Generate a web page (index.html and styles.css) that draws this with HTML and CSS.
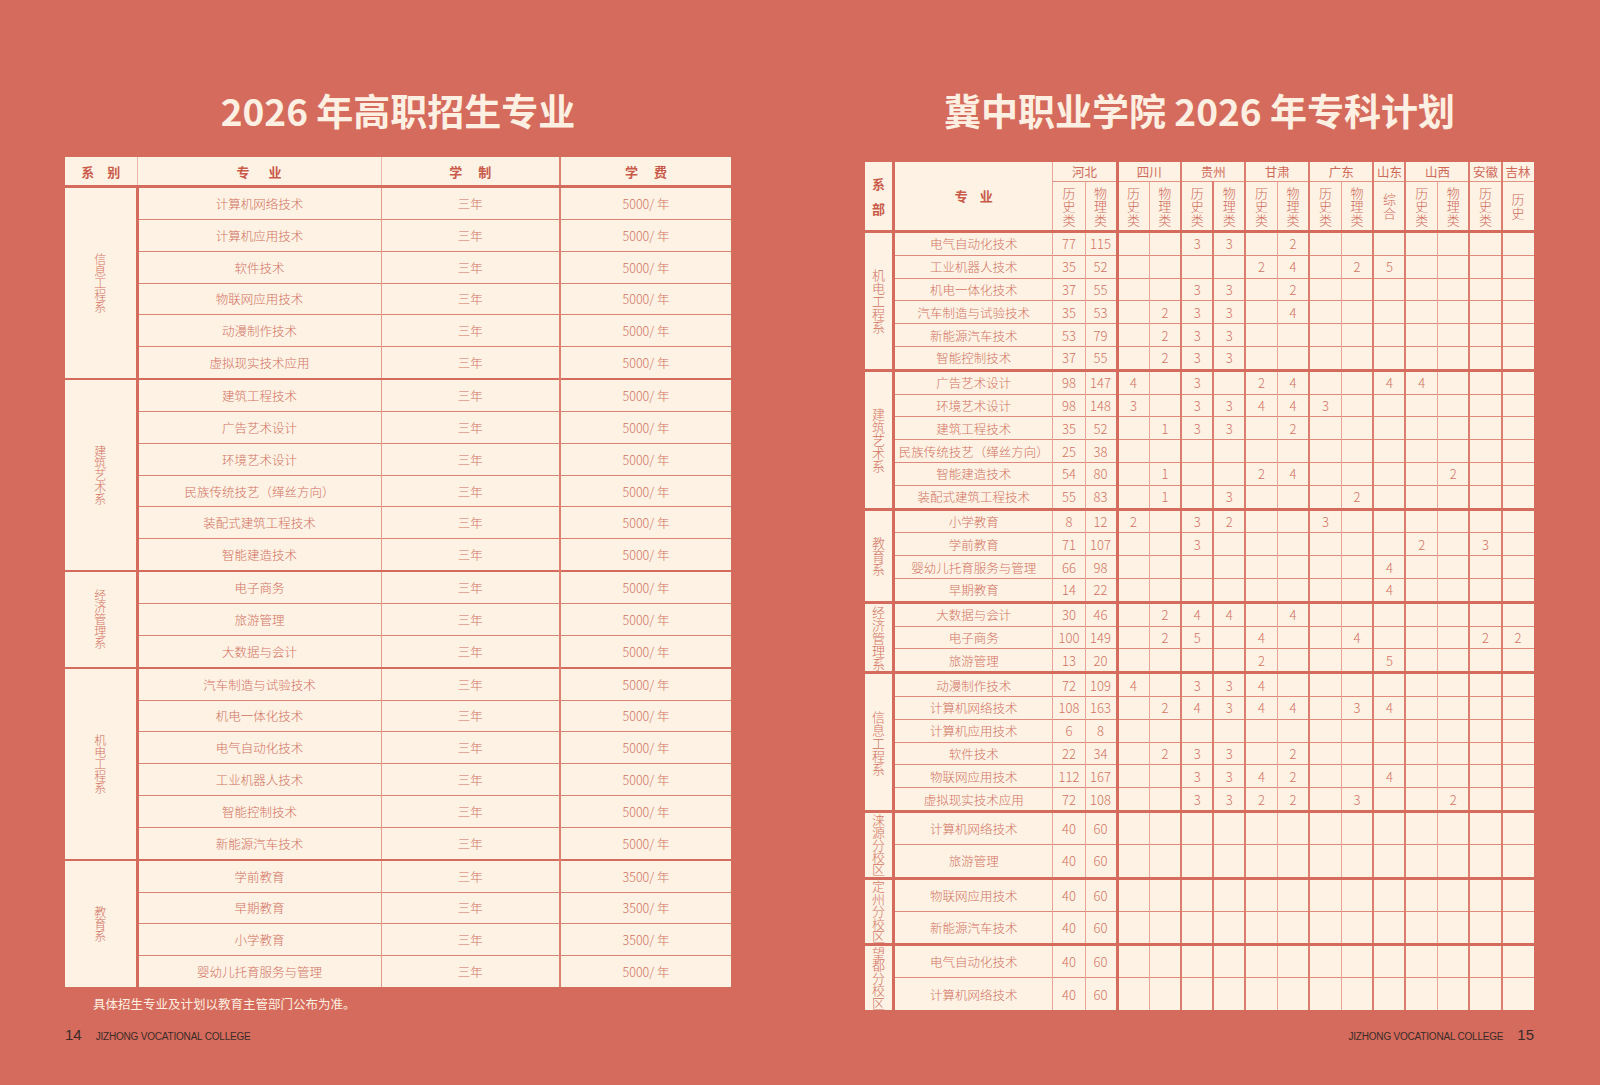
FILE: index.html
```html
<!DOCTYPE html>
<html lang="zh-CN">
<head>
<meta charset="utf-8">
<title>2026 年高职招生专业</title>
<link rel="stylesheet" href="styles.css">
</head>
<body>
<div class="spread">
  <section class="page page-l">
    <h1 class="title">2026 年高职招生专业</h1>
    <table class="tbl tbl-l">
      <colgroup>
        <col class="l-dept"><col class="l-major"><col class="l-len"><col class="l-fee">
      </colgroup>
      <thead>
        <tr><th><span class="sp13">系别</span></th><th><span class="sp19">专业</span></th><th><span class="sp16">学制</span></th><th><span class="sp16">学费</span></th></tr>
      </thead>
      <tbody>
        <tr class="g"><td rowspan="6" class="dept"><span class="vt">信息工程系</span></td><td>计算机网络技术</td><td>三年</td><td>5000/ 年</td></tr>
        <tr><td>计算机应用技术</td><td>三年</td><td>5000/ 年</td></tr>
        <tr><td>软件技术</td><td>三年</td><td>5000/ 年</td></tr>
        <tr><td>物联网应用技术</td><td>三年</td><td>5000/ 年</td></tr>
        <tr><td>动漫制作技术</td><td>三年</td><td>5000/ 年</td></tr>
        <tr><td>虚拟现实技术应用</td><td>三年</td><td>5000/ 年</td></tr>
        <tr class="g"><td rowspan="6" class="dept"><span class="vt">建筑艺术系</span></td><td>建筑工程技术</td><td>三年</td><td>5000/ 年</td></tr>
        <tr><td>广告艺术设计</td><td>三年</td><td>5000/ 年</td></tr>
        <tr><td>环境艺术设计</td><td>三年</td><td>5000/ 年</td></tr>
        <tr><td>民族传统技艺（缂丝方向）</td><td>三年</td><td>5000/ 年</td></tr>
        <tr><td>装配式建筑工程技术</td><td>三年</td><td>5000/ 年</td></tr>
        <tr><td>智能建造技术</td><td>三年</td><td>5000/ 年</td></tr>
        <tr class="g"><td rowspan="3" class="dept"><span class="vt">经济管理系</span></td><td>电子商务</td><td>三年</td><td>5000/ 年</td></tr>
        <tr><td>旅游管理</td><td>三年</td><td>5000/ 年</td></tr>
        <tr><td>大数据与会计</td><td>三年</td><td>5000/ 年</td></tr>
        <tr class="g"><td rowspan="6" class="dept"><span class="vt">机电工程系</span></td><td>汽车制造与试验技术</td><td>三年</td><td>5000/ 年</td></tr>
        <tr><td>机电一体化技术</td><td>三年</td><td>5000/ 年</td></tr>
        <tr><td>电气自动化技术</td><td>三年</td><td>5000/ 年</td></tr>
        <tr><td>工业机器人技术</td><td>三年</td><td>5000/ 年</td></tr>
        <tr><td>智能控制技术</td><td>三年</td><td>5000/ 年</td></tr>
        <tr><td>新能源汽车技术</td><td>三年</td><td>5000/ 年</td></tr>
        <tr class="g"><td rowspan="4" class="dept"><span class="vt">教育系</span></td><td>学前教育</td><td>三年</td><td>3500/ 年</td></tr>
        <tr><td>早期教育</td><td>三年</td><td>3500/ 年</td></tr>
        <tr><td>小学教育</td><td>三年</td><td>3500/ 年</td></tr>
        <tr><td>婴幼儿托育服务与管理</td><td>三年</td><td>5000/ 年</td></tr>
      </tbody>
    </table>
    <p class="note">具体招生专业及计划以教育主管部门公布为准。</p>
    <div class="folio folio-l"><span class="pno">14</span><span class="college">JIZHONG VOCATIONAL COLLEGE</span></div>
  </section>

  <section class="page page-r">
    <h1 class="title">冀中职业学院 2026 年专科计划</h1>
    <table class="tbl tbl-r">
      <colgroup>
        <col class="r-dept"><col class="r-major">
        <col class="n"><col class="n">
        <col class="n b3"><col class="n">
        <col class="n b2"><col class="n b2">
        <col class="n b2"><col class="n">
        <col class="n b2"><col class="n">
        <col class="n b2">
        <col class="n b2"><col class="n">
        <col class="n b2">
        <col class="n b2">
      </colgroup>
      <thead>
        <tr class="h1">
          <th rowspan="2" class="hd-dept"><span class="vt">系部</span></th>
          <th rowspan="2" class="hd-major"><span class="sp12">专业</span></th>
          <th colspan="2">河北</th><th colspan="2">四川</th><th colspan="2">贵州</th><th colspan="2">甘肃</th><th colspan="2">广东</th><th>山东</th><th colspan="2">山西</th><th>安徽</th><th>吉林</th>
        </tr>
        <tr class="h2">
          <th><span class="vt">历史类</span></th><th><span class="vt">物理类</span></th>
          <th><span class="vt">历史类</span></th><th><span class="vt">物理类</span></th>
          <th><span class="vt">历史类</span></th><th><span class="vt">物理类</span></th>
          <th><span class="vt">历史类</span></th><th><span class="vt">物理类</span></th>
          <th><span class="vt">历史类</span></th><th><span class="vt">物理类</span></th>
          <th><span class="vt">综合</span></th>
          <th><span class="vt">历史类</span></th><th><span class="vt">物理类</span></th>
          <th><span class="vt">历史类</span></th>
          <th><span class="vt">历史</span></th>
        </tr>
      </thead>
      <tbody>
        <tr class="g"><td rowspan="6" class="dept"><span class="vt">机电工程系</span></td><td class="m">电气自动化技术</td><td>77</td><td>115</td><td></td><td></td><td>3</td><td>3</td><td></td><td>2</td><td></td><td></td><td></td><td></td><td></td><td></td><td></td></tr>
        <tr><td class="m">工业机器人技术</td><td>35</td><td>52</td><td></td><td></td><td></td><td></td><td>2</td><td>4</td><td></td><td>2</td><td>5</td><td></td><td></td><td></td><td></td></tr>
        <tr><td class="m">机电一体化技术</td><td>37</td><td>55</td><td></td><td></td><td>3</td><td>3</td><td></td><td>2</td><td></td><td></td><td></td><td></td><td></td><td></td><td></td></tr>
        <tr><td class="m">汽车制造与试验技术</td><td>35</td><td>53</td><td></td><td>2</td><td>3</td><td>3</td><td></td><td>4</td><td></td><td></td><td></td><td></td><td></td><td></td><td></td></tr>
        <tr><td class="m">新能源汽车技术</td><td>53</td><td>79</td><td></td><td>2</td><td>3</td><td>3</td><td></td><td></td><td></td><td></td><td></td><td></td><td></td><td></td><td></td></tr>
        <tr><td class="m">智能控制技术</td><td>37</td><td>55</td><td></td><td>2</td><td>3</td><td>3</td><td></td><td></td><td></td><td></td><td></td><td></td><td></td><td></td><td></td></tr>
        <tr class="g"><td rowspan="6" class="dept"><span class="vt">建筑艺术系</span></td><td class="m">广告艺术设计</td><td>98</td><td>147</td><td>4</td><td></td><td>3</td><td></td><td>2</td><td>4</td><td></td><td></td><td>4</td><td>4</td><td></td><td></td><td></td></tr>
        <tr><td class="m">环境艺术设计</td><td>98</td><td>148</td><td>3</td><td></td><td>3</td><td>3</td><td>4</td><td>4</td><td>3</td><td></td><td></td><td></td><td></td><td></td><td></td></tr>
        <tr><td class="m">建筑工程技术</td><td>35</td><td>52</td><td></td><td>1</td><td>3</td><td>3</td><td></td><td>2</td><td></td><td></td><td></td><td></td><td></td><td></td><td></td></tr>
        <tr><td class="m">民族传统技艺（缂丝方向）</td><td>25</td><td>38</td><td></td><td></td><td></td><td></td><td></td><td></td><td></td><td></td><td></td><td></td><td></td><td></td><td></td></tr>
        <tr><td class="m">智能建造技术</td><td>54</td><td>80</td><td></td><td>1</td><td></td><td></td><td>2</td><td>4</td><td></td><td></td><td></td><td></td><td>2</td><td></td><td></td></tr>
        <tr><td class="m">装配式建筑工程技术</td><td>55</td><td>83</td><td></td><td>1</td><td></td><td>3</td><td></td><td></td><td></td><td>2</td><td></td><td></td><td></td><td></td><td></td></tr>
        <tr class="g"><td rowspan="4" class="dept"><span class="vt">教育系</span></td><td class="m">小学教育</td><td>8</td><td>12</td><td>2</td><td></td><td>3</td><td>2</td><td></td><td></td><td>3</td><td></td><td></td><td></td><td></td><td></td><td></td></tr>
        <tr><td class="m">学前教育</td><td>71</td><td>107</td><td></td><td></td><td>3</td><td></td><td></td><td></td><td></td><td></td><td></td><td>2</td><td></td><td>3</td><td></td></tr>
        <tr><td class="m">婴幼儿托育服务与管理</td><td>66</td><td>98</td><td></td><td></td><td></td><td></td><td></td><td></td><td></td><td></td><td>4</td><td></td><td></td><td></td><td></td></tr>
        <tr><td class="m">早期教育</td><td>14</td><td>22</td><td></td><td></td><td></td><td></td><td></td><td></td><td></td><td></td><td>4</td><td></td><td></td><td></td><td></td></tr>
        <tr class="g"><td rowspan="3" class="dept"><span class="vt">经济管理系</span></td><td class="m">大数据与会计</td><td>30</td><td>46</td><td></td><td>2</td><td>4</td><td>4</td><td></td><td>4</td><td></td><td></td><td></td><td></td><td></td><td></td><td></td></tr>
        <tr><td class="m">电子商务</td><td>100</td><td>149</td><td></td><td>2</td><td>5</td><td></td><td>4</td><td></td><td></td><td>4</td><td></td><td></td><td></td><td>2</td><td>2</td></tr>
        <tr><td class="m">旅游管理</td><td>13</td><td>20</td><td></td><td></td><td></td><td></td><td>2</td><td></td><td></td><td></td><td>5</td><td></td><td></td><td></td><td></td></tr>
        <tr class="g"><td rowspan="6" class="dept"><span class="vt">信息工程系</span></td><td class="m">动漫制作技术</td><td>72</td><td>109</td><td>4</td><td></td><td>3</td><td>3</td><td>4</td><td></td><td></td><td></td><td></td><td></td><td></td><td></td><td></td></tr>
        <tr><td class="m">计算机网络技术</td><td>108</td><td>163</td><td></td><td>2</td><td>4</td><td>3</td><td>4</td><td>4</td><td></td><td>3</td><td>4</td><td></td><td></td><td></td><td></td></tr>
        <tr><td class="m">计算机应用技术</td><td>6</td><td>8</td><td></td><td></td><td></td><td></td><td></td><td></td><td></td><td></td><td></td><td></td><td></td><td></td><td></td></tr>
        <tr><td class="m">软件技术</td><td>22</td><td>34</td><td></td><td>2</td><td>3</td><td>3</td><td></td><td>2</td><td></td><td></td><td></td><td></td><td></td><td></td><td></td></tr>
        <tr><td class="m">物联网应用技术</td><td>112</td><td>167</td><td></td><td></td><td>3</td><td>3</td><td>4</td><td>2</td><td></td><td></td><td>4</td><td></td><td></td><td></td><td></td></tr>
        <tr><td class="m">虚拟现实技术应用</td><td>72</td><td>108</td><td></td><td></td><td>3</td><td>3</td><td>2</td><td>2</td><td></td><td>3</td><td></td><td></td><td>2</td><td></td><td></td></tr>
        <tr class="g br"><td rowspan="2" class="dept"><span class="vt">涞源分校区</span></td><td class="m">计算机网络技术</td><td>40</td><td>60</td><td></td><td></td><td></td><td></td><td></td><td></td><td></td><td></td><td></td><td></td><td></td><td></td><td></td></tr>
        <tr class="br"><td class="m">旅游管理</td><td>40</td><td>60</td><td></td><td></td><td></td><td></td><td></td><td></td><td></td><td></td><td></td><td></td><td></td><td></td><td></td></tr>
        <tr class="g br"><td rowspan="2" class="dept"><span class="vt">定州分校区</span></td><td class="m">物联网应用技术</td><td>40</td><td>60</td><td></td><td></td><td></td><td></td><td></td><td></td><td></td><td></td><td></td><td></td><td></td><td></td><td></td></tr>
        <tr class="br"><td class="m">新能源汽车技术</td><td>40</td><td>60</td><td></td><td></td><td></td><td></td><td></td><td></td><td></td><td></td><td></td><td></td><td></td><td></td><td></td></tr>
        <tr class="g br"><td rowspan="2" class="dept"><span class="vt">望都分校区</span></td><td class="m">电气自动化技术</td><td>40</td><td>60</td><td></td><td></td><td></td><td></td><td></td><td></td><td></td><td></td><td></td><td></td><td></td><td></td><td></td></tr>
        <tr class="br"><td class="m">计算机网络技术</td><td>40</td><td>60</td><td></td><td></td><td></td><td></td><td></td><td></td><td></td><td></td><td></td><td></td><td></td><td></td><td></td></tr>
      </tbody>
    </table>
    <div class="folio folio-r"><span class="college">JIZHONG VOCATIONAL COLLEGE</span><span class="pno">15</span></div>
  </section>
</div>
</body>
</html>
```

FILE: styles.css
```css
html, body {
  margin: 0;
  padding: 0;
}
body {
  background: #d56b5c;
  font-family: "Noto Sans CJK SC", "Noto Sans", sans-serif;
  color: #cf6d5f;
}
.spread {
  display: flex;
  width: 1600px;
  height: 1085px;
}
.page {
  width: 800px;
  height: 1085px;
  box-sizing: border-box;
  display: flex;
  flex-direction: column;
  padding-bottom: 40px;
}
.page-l {
  padding-left: 65px;
  padding-right: 69px;
}
.page-r {
  padding-left: 65px;
  padding-right: 66px;
}
.title {
  margin: 86px 0 0;
  height: 48px;
  line-height: 48px;
  font-size: 37px;
  font-weight: 700;
  color: #fdf0e2;
  text-align: center;
  white-space: nowrap;
}
.tbl {
  border-collapse: collapse;
  table-layout: fixed;
  background: #fdf2e4;
}
.tbl th, .tbl td {
  padding: 0;
  text-align: center;
  vertical-align: middle;
  white-space: nowrap;
}
/* stacked (vertical) labels: one character per line */
.vt {
  display: inline-block;
  width: 1em;
  white-space: normal;
  word-break: break-all;
  vertical-align: middle;
}

/* ---------- left table ---------- */
.tbl-l {
  width: 666px;
  margin-top: 23px;
}
.l-dept { width: 72px; }
.l-major { width: 244px; }
.l-len { width: 179px; }
.l-fee { width: 171px; }
.tbl-l th {
  height: 28px;
  font-size: 13px;
  font-weight: 700;
  color: #c95a4a;
  border-bottom: 3px solid #d56b5c;
  border-left: 1px solid #ecb7aa;
}
.tbl-l th:first-child { border-left: none; }
.tbl-l th:last-child { border-left: 2px solid #dc8272; }
.sp13, .sp16, .sp19, .sp12 { display: inline-block; }
.sp13 { letter-spacing: 13px; margin-right: -13px; }
.sp16 { letter-spacing: 16px; margin-right: -16px; }
.sp19 { letter-spacing: 19px; margin-right: -19px; }
.sp12 { letter-spacing: 12px; margin-right: -12px; }
.tbl-l td {
  height: 30.85px;
  font-size: 12.5px;
  font-weight: 300;
  color: #d27161;
  border-top: 1px solid #dc8474;
  border-left: 1px solid #e49c8e;
}
.tbl-l td:last-child { border-left: 2px solid #dc8272; }
.tbl-l tr.g td { border-top: 2px solid #d56b5c; }
.tbl-l td.dept {
  border-right: 3px solid #d56b5c;
  border-left: none;
  font-size: 12px;
  line-height: 12px;
}

.note {
  margin: 9px 0 0 28px;
  font-size: 12.5px;
  line-height: 16px;
  color: #fdf0e2;
}
.folio {
  display: flex;
  align-items: baseline;
  gap: 14px;
  margin-top: auto;
  line-height: 16px;
  color: #3a2b29;
  font-family: "Liberation Sans", Arial, sans-serif;
}
.folio-r { justify-content: flex-end; }
.pno { font-size: 15px; }
.college { font-size: 10px; letter-spacing: -0.2px; }

/* ---------- right table ---------- */
.tbl-r {
  width: 668.6px;
  margin-top: 28px;
}
.r-dept { width: 28.6px; }
.r-major { width: 159.4px; }
.tbl-r col.n { width: 32.04px; }
.tbl-r col.b2 { border-left: 2px solid #dc7e6f; }
.tbl-r col.b3 { border-left: 3px solid #d56b5c; }
.tbl-r th {
  font-weight: 400;
  font-size: 12.5px;
  color: #cf6a5b;
  border-left: 1px solid #e8a597;
}
.tbl-r tr.h1 th {
  height: 19px;
  border-bottom: 1px solid #e39485;
  line-height: 16px;
}
.tbl-r tr.h2 th {
  height: 48px;
  border-bottom: 3px solid #d56b5c;
  font-size: 13px;
  font-weight: 300;
  line-height: 13.6px;
}
.tbl-r tr.h1 th.hd-dept {
  font-weight: 700;
  font-size: 13px;
  line-height: 25px;
  color: #c95a4a;
  border-left: none;
  border-right: 3px solid #d56b5c;
  border-bottom: 3px solid #d56b5c;
}
.tbl-r tr.h1 th.hd-major {
  font-weight: 700;
  font-size: 13px;
  color: #c95a4a;
  border-bottom: 3px solid #d56b5c;
  border-left: 3px solid #d56b5c;
}
.tbl-r td {
  height: 21.8px;
  font-size: 13px;
  font-weight: 300;
  color: #d27363;
  border-top: 1px solid #df8a7b;
  border-left: 1px solid #e8a496;
}
.tbl-r td.m {
  font-size: 12.5px;
  border-left: none;
}
.tbl-r tr.br td { height: 31.3px; }
.tbl-r tr.g td { border-top: 3px solid #d56b5c; }
.tbl-r td.dept {
  border-left: none;
  border-right: 3px solid #d56b5c;
  font-size: 13px;
  line-height: 13px;
}
.tbl-r tr.br td.dept {
  height: auto;
  line-height: 12.4px;
}
```
